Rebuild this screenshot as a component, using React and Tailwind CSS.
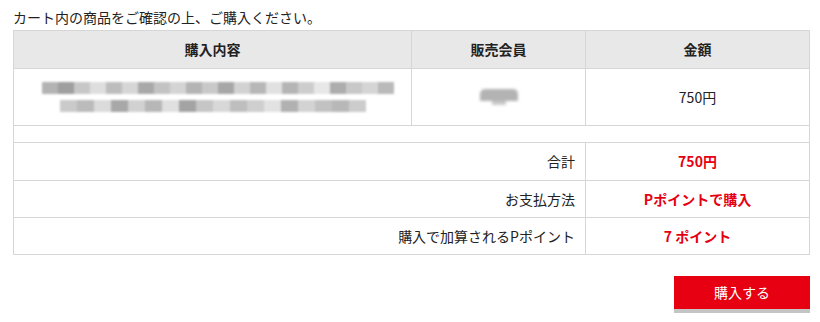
import React from "react";

const blurLine1 = [
  "#9a9a9a","#7f7f7f","#b5b5b5","#d4d4d4","#a8a8a8","#c9c9c9","#8d8d8d","#b0b0b0","#c6c6c6","#9c9c9c","#b8b8b8","#8a8a8a","#c4c4c4","#a0a0a0","#d8d8d8","#9d9d9d","#bdbdbd","#e0e0e0","#929292","#b6b6b6","#c8c8c8","#a3a3a3",
];
const blurLine2 = [
  "#b9b9b9","#a5a5a5","#d0d0d0","#8b8b8b","#c2c2c2","#9f9f9f","#d6d6d6","#858585","#b3b3b3","#cccccc","#a9a9a9","#bfbfbf","#d9d9d9","#979797","#c5c5c5","#aeaeae","#a1a1a1","#bcbcbc",
];

function Blur() {
  return (
    <div className="flex flex-col items-center gap-[6px] blur-[1px] opacity-75">
      <div className="flex pl-[10px]">
        {blurLine1.map((c, i) => (
          <div key={i} className="w-[16px] h-[12px]" style={{ background: c }} />
        ))}
      </div>
      <div className="flex">
        {blurLine2.map((c, i) => (
          <div key={i} className="w-[17px] h-[12px]" style={{ background: c }} />
        ))}
      </div>
    </div>
  );
}

export default function App() {
  const font = { fontFamily: '"Noto Sans CJK JP", "Noto Sans", sans-serif' };
  return (
    <div className="w-[820px] h-[322px] bg-white text-[#222]" style={font}>
      <div className="pl-[13px] pt-[7px] h-[30px] text-[14px] leading-[20px]">
        カート内の商品をご確認の上、ご購入ください。
      </div>
      <div className="ml-[13px] w-[797px]">
        <table className="w-full border-collapse table-fixed text-[14px]">
          <colgroup>
            <col className="w-[398px]" />
            <col className="w-[174px]" />
            <col />
          </colgroup>
          <tbody>
            <tr className="h-[38px] bg-[#e8e8e8]">
              <th className="border border-[#d6d6d6] font-bold text-center">購入内容</th>
              <th className="border border-[#d6d6d6] font-bold text-center">販売会員</th>
              <th className="border border-[#d6d6d6] font-bold text-center">金額</th>
            </tr>
            <tr className="h-[57px]">
              <td className="border border-[#d6d6d6] text-center">
                <Blur />
              </td>
              <td className="border border-[#d6d6d6] text-center">
                <div className="flex justify-center blur-[1.5px]">
                  <div className="flex flex-col items-center">
                    <div className="w-[38px] h-[12px] bg-[#b3b3b3] rounded-t-[5px]" />
                    <div className="w-[14px] h-[4px] bg-[#c9c9c9]" />
                  </div>
                </div>
              </td>
              <td className="border border-[#d6d6d6] text-center">750円</td>
            </tr>
            <tr className="h-[17px]">
              <td colSpan={3} className="border border-[#d6d6d6]" />
            </tr>
            <tr className="h-[38px]">
              <td colSpan={2} className="border border-[#d6d6d6] text-right pr-[10px]">合計</td>
              <td className="border border-[#d6d6d6] text-center font-bold text-[#e60012]">750円</td>
            </tr>
            <tr className="h-[37px]">
              <td colSpan={2} className="border border-[#d6d6d6] text-right pr-[10px]">お支払方法</td>
              <td className="border border-[#d6d6d6] text-center font-bold text-[#e60012]">Pポイントで購入</td>
            </tr>
            <tr className="h-[37px]">
              <td colSpan={2} className="border border-[#d6d6d6] text-right pr-[10px]">購入で加算されるPポイント</td>
              <td className="border border-[#d6d6d6] text-center font-bold text-[#e60012]">7 ポイント</td>
            </tr>
          </tbody>
        </table>
        <div className="flex justify-end mt-[21px]">
          <button className="w-[136px] h-[33px] bg-[#e60012] text-white text-[14px] shadow-[0_4px_0_#c4c4c4]">
            購入する
          </button>
        </div>
      </div>
    </div>
  );
}
